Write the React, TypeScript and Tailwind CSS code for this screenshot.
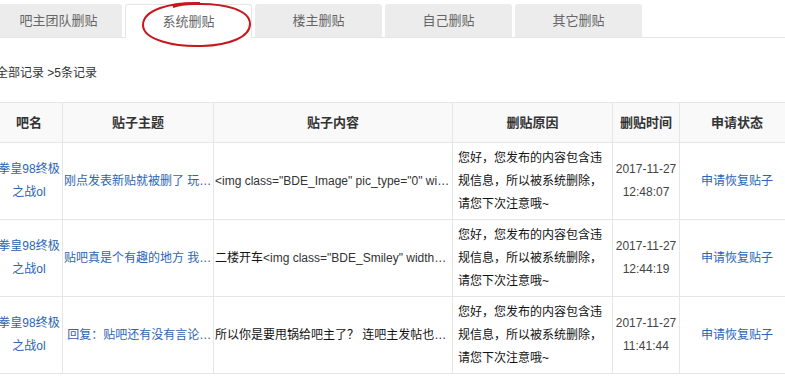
const tabs = ['吧主团队删贴', '系统删贴', '楼主删贴', '自己删贴', '其它删贴'];

interface DeletedPost {
  bar: string[];
  topic: string;
  content: React.ReactNode;
  date: string;
  time: string;
}

const posts: DeletedPost[] = [
  {
    bar: ['拳皇98终极', '之战ol'],
    topic: '刚点发表新贴就被删了 玩家们都来看看这是怎么回事',
    content: '<img class="BDE_Image" pic_type="0" width="560" height="315" src="https://imgsa.baidu.com/forum/pic/item/abc.jpg">',
    date: '2017-11-27',
    time: '12:48:07',
  },
  {
    bar: ['拳皇98终极', '之战ol'],
    topic: '贴吧真是个有趣的地方 我才发了一个贴子',
    content: (
      <>
        <span className="text-[#111]">二楼开车</span>
        {'<img class="BDE_Smiley" width="30" height="30" changedsize="false" src="https://gsp0.baidu.com/face.png">'}
      </>
    ),
    date: '2017-11-27',
    time: '12:44:19',
  },
  {
    bar: ['拳皇98终极', '之战ol'],
    topic: ' 回复：贴吧还有没有言论自由了',
    content: <span className="text-[#111]">所以你是要甩锅给吧主了？ 连吧主发帖也会被删的好吗</span>,
    date: '2017-11-27',
    time: '11:41:44',
  },
];

const headers = ['吧名', '贴子主题', '贴子内容', '删贴原因', '删贴时间', '申请状态'];

const cell = 'border-r border-b border-[#e6e6e6] flex items-center';

export default function App() {
  return (
    <div className="w-[785px] h-[376px] overflow-hidden bg-white text-[#333] font-['Liberation_Sans','Noto_Sans_CJK_SC',sans-serif]">
      <div className="relative -ml-[4px] w-[800px]">
        {/* tab bar */}
        <div className="flex gap-[3px] pt-[4px] border-b border-[#e6e6e6] -ml-px">
          {tabs.map((tab, i) =>
            i === 1 ? (
              <div
                key={tab}
                className="w-[127px] h-[34px] -mb-px bg-white border border-b-0 border-[#e6e6e6] rounded-t-[3px] flex items-center justify-center text-[13px] text-[#666]"
              >
                {tab}
              </div>
            ) : (
              <div
                key={tab}
                className="w-[127px] h-[33px] bg-[#ececec] rounded-t-[3px] flex items-center justify-center text-[13px] text-[#666]"
              >
                {tab}
              </div>
            ),
          )}
        </div>

        {/* hand-drawn annotation */}
        <svg className="absolute left-[144px] top-0 pointer-events-none" width="116" height="50" viewBox="0 0 116 50">
          <path
            d="M60 3 C 30 2, 3 10, 3 25 C 3 40, 35 47, 62 46 C 90 45, 110 37, 110 24 C 110 10, 85 3, 55 4 C 45 4, 38 5, 33 7"
            fill="none"
            stroke="#c8161d"
            strokeWidth="2"
          />
        </svg>

        <div className="mt-[25px] h-[20px] leading-[20px] text-[12px] text-[#333]">全部记录 &gt;5条记录</div>

        {/* records */}
        <div className="mt-[19px] grid grid-cols-[67px_151px_239px_160px_67px_115px] border-t border-[#e6e6e6]">
          {headers.map((h) => (
            <div key={h} className={`${cell} h-[40px] justify-center bg-[#f9f9f9] text-[13px] font-bold text-[#333]`}>
              {h}
            </div>
          ))}
          {posts.map((p, r) => (
            <div key={r} className="contents">
              <div className={`${cell} h-[77px] justify-center text-center text-[12px] leading-[23px] text-[#2d64b3]`}>
                <div>
                  {p.bar[0]}
                  <br />
                  {p.bar[1]}
                </div>
              </div>
              <div className={`${cell} px-px text-[12px] text-[#2d64b3]`}>
                <div className="w-full overflow-hidden text-ellipsis whitespace-pre text-center">{p.topic}</div>
              </div>
              <div className={`${cell} px-px text-[12px] text-[#333]`}>
                <div className="w-full overflow-hidden text-ellipsis whitespace-nowrap text-center">{p.content}</div>
              </div>
              <div className={`${cell} px-[5px] text-[12px] leading-[23px] text-[#111]`}>
                您好，您发布的内容包含违规信息，所以被系统删除，请您下次注意哦~
              </div>
              <div className={`${cell} justify-center text-center text-[12px] leading-[23px] text-[#444] whitespace-nowrap`}>
                <div>
                  {p.date}
                  <br />
                  {p.time}
                </div>
              </div>
              <div className={`${cell} justify-center text-[12px] text-[#2d64b3]`}>申请恢复贴子</div>
            </div>
          ))}
        </div>
      </div>
    </div>
  );
}
